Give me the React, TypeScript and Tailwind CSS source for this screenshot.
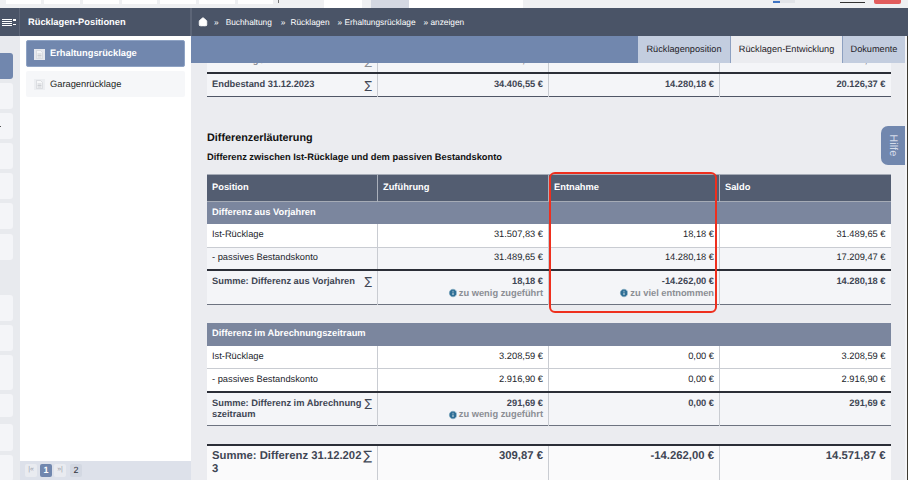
import { Home, Info } from 'lucide-react'

const th = 'border-l border-[#aab0bb] first:border-l-0 px-[5px] text-left align-middle text-[9.3px] font-bold text-white'
const cell = 'border-l border-[#c9ccd2] first:border-l-0 px-[5px] text-[9.3px]'

type Row = { label: string; values: string[] }
type SumRow = { label: string; values: string[]; notes?: (string | null)[] }

function Sigma({ className = '' }: { className?: string }) {
  return <span className={`absolute right-[5px] font-['DejaVu_Sans'] font-normal ${className}`}>∑</span>
}

function Note({ text }: { text: string }) {
  return (
    <div className="flex items-center justify-end gap-[1px] text-[9.3px] font-bold text-[#8b8e94]">
      <Info size={10} className="fill-[#2f6f96] text-white" />
      {text}
    </div>
  )
}

function Columns() {
  return (
    <colgroup>
      <col className="w-[170.5px]" />
      <col className="w-[171px]" />
      <col className="w-[171px]" />
      <col className="w-[171px]" />
    </colgroup>
  )
}

function RowLine({ row, alt }: { row: Row; alt?: boolean }) {
  return (
    <tr className={`h-[23px] border-b border-[#c9ccd2] ${alt ? 'bg-[#f4f5f8]' : 'bg-white'}`}>
      <td className={`${cell} text-[#22252b]`}>{row.label}</td>
      {row.values.map((v, i) => (
        <td key={i} className={`${cell} text-right text-[#22252b]`}>{v}</td>
      ))}
    </tr>
  )
}

function Summary({ row }: { row: SumRow }) {
  return (
    <tr className="h-[34px] border-t-2 border-b border-t-[#2b2e37] border-b-[#6d7380] bg-[#f4f5f8]">
      <td className={`${cell} relative pt-[5px] align-top font-bold leading-[11.5px] text-[#3f4654]`}>
        <div className="break-all pr-[9px]">{row.label}</div>
        <Sigma className="top-[5px] text-[11px]" />
      </td>
      {row.values.map((v, i) => (
        <td key={i} className={`${cell} pt-[5px] align-top text-right font-bold leading-[11.5px] text-[#3f4654]`}>
          {v}
          {row.notes?.[i] && <Note text={row.notes[i] as string} />}
        </td>
      ))}
    </tr>
  )
}

function GroupHead({ title }: { title: string }) {
  return (
    <tr className="h-[23px] bg-[#7b869e]">
      <td colSpan={4} className="px-[5px] text-[9.3px] font-bold text-white">{title}</td>
    </tr>
  )
}

const cardClass = 'rounded-r-[3px] bg-[#f4f5f8]'
const upperRows = ['mt-[4px]', 'mt-[4px]', 'mt-[4px]', 'mt-[4px]', 'mt-[5px]']
const lowerRows = ['mt-[31px] h-[26px]', 'mt-[4px] h-[26px]', 'mt-[4px] h-[35px]', 'mt-[4px] h-[23px]', 'mt-[7px] h-[27px]', 'mt-[4px] h-[26px]', 'mt-[4px] h-[26px]']

export default function App() {
  return (
    <div className="flex h-[480px] w-[908px] flex-col overflow-hidden bg-white font-['Liberation_Sans',Arial,sans-serif] [text-rendering:geometricPrecision]">
      {/* browser strip */}
      <div className="flex h-[8px] shrink-0 items-start bg-[#eff0f2]">
        <div className="ml-[6px] h-[4px] w-[35px] bg-white" />
        <div className="ml-[3px] h-[4px] w-[36px] bg-white" />
        <div className="ml-[3px] h-[4px] w-[36px] bg-white" />
        <div className="ml-[3px] h-[4px] w-[35px] bg-white" />
        <div className="ml-[3px] h-[4px] w-[36px] bg-white" />
        <div className="ml-[3px] h-[4px] w-[36px] bg-white" />
        <div className="ml-[3px] h-[4px] w-[35px] bg-white" />
        <div className="ml-[5px] h-[3px] w-[1px] bg-[#777]" />
        <div className="ml-[45px] h-[8px] w-[38px] bg-white" />
        <div className="ml-[9px] h-[8px] w-[38px] bg-[#d4d8e2]" />
        <div className="h-[8px] w-[114px] bg-white" />
        <div className="ml-[250px] flex h-[3px] w-[22px] items-end bg-[#e2e4e8]">
          <div className="h-[2px] w-[7px] bg-[#3f74c4]" />
        </div>
        <div className="ml-[45px] flex h-[3px] w-[25px] items-end overflow-hidden border-b border-[#333] text-[9px] leading-[9px] text-[#333]">
          admin
        </div>
        <div className="ml-[9px] h-[4px] w-[27px] rounded-b-[2px] bg-[#e25c5c]" />
      </div>

      <div className="flex min-h-0 flex-1">
        {/* narrow menu column */}
        <div className="flex w-[20px] shrink-0 flex-col bg-[#e8eaee]">
          <div className="flex h-[28px] shrink-0 items-center justify-end gap-[1px] border-r border-[#5c6577] bg-[#4a5467] pr-[3px]">
            <div className="flex w-[10px] flex-col gap-[1px]">
              <div className="h-[1px] bg-white" />
              <div className="h-[1px] bg-white" />
              <div className="h-[1px] bg-white" />
              <div className="h-[1px] bg-white" />
            </div>
            <div className="flex flex-col gap-[3px]">
              <div className="h-[1.5px] w-[3px] bg-white" />
              <div className="h-[1.5px] w-[3px] bg-white" />
            </div>
          </div>
          <div className="w-[13px]">
            <div className="mt-[17px] h-[26px] rounded-r-[3px] bg-[#7187ae]" />
            <div className={`mt-[4px] h-[26px] ${cardClass}`} />
            {upperRows.map((c, i) => (
              <div key={i} className={`${c} flex h-[26px] items-center ${cardClass}`}>
                {i === 0 && <div className="h-[1px] w-[1px] bg-[#555]" />}
              </div>
            ))}
          </div>
          <div className="mt-[4px] h-[2px] bg-[#666e80]" />
          <div className="w-[13px]">
            {lowerRows.map((c, i) => (
              <div key={i} className={`${c} ${cardClass}`} />
            ))}
          </div>
        </div>

        {/* positions sidebar */}
        <div className="flex w-[171px] shrink-0 flex-col bg-white">
          <div className="flex h-[28px] shrink-0 items-center border-r border-[#5c6577] bg-[#4a5467] pl-[8px] pt-[1px] text-[9.3px] font-bold text-white">
            Rücklagen-Positionen
          </div>
          <div className="flex flex-1 flex-col gap-[4px] px-[6px] pt-[4px]">
            <div className="flex h-[27px] items-center gap-[5px] rounded-[2px] border border-[#8fa3c4] bg-[#7187ae] pl-[7px] pt-[1px] text-[9.3px] font-bold text-white">
              <FileIcon active />
              Erhaltungsrücklage
            </div>
            <div className="flex h-[26px] items-center gap-[5px] rounded-[2px] bg-[#f6f7f9] pl-[8px] pt-[1px] text-[9.3px] text-[#1c1e22]">
              <FileIcon />
              Garagenrücklage
            </div>
          </div>
          <div className="flex h-[19px] shrink-0 items-center gap-[2px] bg-[#dde1ea] pl-[5px] text-[9px] font-bold">
            <span className="flex h-[13px] w-[12px] items-center justify-center rounded-[2px] bg-[#e9ebf0] text-[7px] font-normal text-[#9aa0ab]">|«</span>
            <span className="ml-[1px] flex h-[13px] w-[12px] items-center justify-center rounded-[2px] bg-[#7187ae] text-white">1</span>
            <span className="flex h-[13px] w-[12px] items-center justify-center rounded-[2px] bg-[#e9ebf0] text-[7px] font-normal text-[#9aa0ab]">»|</span>
            <span className="ml-[2px] flex h-[13px] w-[12px] items-center justify-center rounded-[2px] bg-[#d3d8e2] font-normal text-[#30343c]">2</span>
          </div>
        </div>

        {/* main */}
        <div className="relative flex min-w-0 flex-1 flex-col bg-[#ebecf0]">
          <div className="flex h-[28px] shrink-0 items-center border-l border-[#5c6577] bg-[#4a5467] pl-[6px] text-[8.3px] text-white">
            <Home size={10} className="fill-white" />
            <span className="ml-[6px]">»</span>
            <span className="ml-[7px]">Buchhaltung</span>
            <span className="ml-[9px]">»</span>
            <span className="ml-[5px]">Rücklagen</span>
            <span className="ml-[8px]">» Erhaltungsrücklage</span>
            <span className="ml-[8px]">» anzeigen</span>
          </div>
          <div className="z-10 flex h-[27px] shrink-0 justify-end bg-[#7187ae] pr-[3px] text-[9.2px] text-[#1f2228]">
            <div className="flex w-[92px] items-center justify-center bg-[#c3cddf]">Rücklagenposition</div>
            <div className="flex w-[113px] items-center justify-center border-x border-[#8da0c0] bg-[#ebecf0]">Rücklagen-Entwicklung</div>
            <div className="flex w-[62px] items-center justify-center bg-[#c3cddf]">Dokumente</div>
          </div>

          <div className="min-h-0 flex-1 overflow-hidden pl-[16px] pr-[15px]">
            <table className="mt-[-13px] w-[683.5px] table-fixed border-collapse">
              <Columns />
              <tbody>
                <tr className="h-[23px] bg-[#f4f5f8]">
                  <td className={`${cell} relative font-bold text-[#8b8e94]`}>
                    Zuführung / Entnahme
                    <Sigma className="top-[4px] text-[11px]" />
                  </td>
                  <td className={`${cell} text-right font-bold text-[#8b8e94]`}>3.208,59 €</td>
                  <td className={cell} />
                  <td className={`${cell} text-right font-bold text-[#8b8e94]`}>3.208,59 €</td>
                </tr>
                <tr className="h-[23px] border-t-2 border-b border-t-[#2b2e37] border-b-[#4f5666] bg-[#f4f5f8]">
                  <td className={`${cell} relative font-bold text-[#3f4654]`}>
                    Endbestand 31.12.2023
                    <Sigma className="top-[4px] text-[11px]" />
                  </td>
                  {['34.406,55 €', '14.280,18 €', '20.126,37 €'].map(v => (
                    <td key={v} className={`${cell} text-right font-bold text-[#3f4654]`}>{v}</td>
                  ))}
                </tr>
              </tbody>
            </table>

            <h2 className="mt-[35px] text-[10.8px] font-bold leading-[13px] text-[#111]">Differenzerläuterung</h2>
            <h3 className="mt-[7px] text-[9.3px] font-bold leading-[11px] text-[#111]">
              Differenz zwischen Ist-Rücklage und dem passiven Bestandskonto
            </h3>

            <table className="mt-[11px] w-[683.5px] table-fixed border-collapse">
              <Columns />
              <thead>
                <tr className="h-[27px] border-y border-[#a5abb6] bg-[#535d71]">
                  <th className={th}>Position</th>
                  <th className={th}>Zuführung</th>
                  <th className={th}>Entnahme</th>
                  <th className={th}>Saldo</th>
                </tr>
              </thead>
              <tbody>
                <GroupHead title="Differenz aus Vorjahren" />
                <RowLine row={{ label: 'Ist-Rücklage', values: ['31.507,83 €', '18,18 €', '31.489,65 €'] }} />
                <RowLine alt row={{ label: '- passives Bestandskonto', values: ['31.489,65 €', '14.280,18 €', '17.209,47 €'] }} />
                <Summary
                  row={{
                    label: 'Summe: Differenz aus Vorjahren',
                    values: ['18,18 €', '-14.262,00 €', '14.280,18 €'],
                    notes: ['zu wenig zugeführt', 'zu viel entnommen', null]
                  }}
                />
              </tbody>
            </table>

            <table className="mt-[18px] w-[683.5px] table-fixed border-collapse">
              <Columns />
              <tbody>
                <GroupHead title="Differenz im Abrechnungszeitraum" />
                <RowLine row={{ label: 'Ist-Rücklage', values: ['3.208,59 €', '0,00 €', '3.208,59 €'] }} />
                <RowLine row={{ label: '- passives Bestandskonto', values: ['2.916,90 €', '0,00 €', '2.916,90 €'] }} />
                <Summary
                  row={{
                    label: 'Summe: Differenz im Abrechnungszeitraum',
                    values: ['291,69 €', '0,00 €', '291,69 €'],
                    notes: ['zu wenig zugeführt', null, null]
                  }}
                />
              </tbody>
            </table>

            <table className="mt-[18px] w-[683.5px] table-fixed border-collapse">
              <Columns />
              <tbody>
                <tr className="h-[36px] border-t-2 border-t-[#2b2e37] bg-[#fafafb]">
                  <td className={`${cell} relative pt-[4px] align-top text-[11.3px] font-bold leading-[13px] text-[#3f4654]`}>
                    <div className="break-all pr-[9px]">Summe: Differenz 31.12.2023</div>
                    <Sigma className="top-[4px] text-[13px]" />
                  </td>
                  {['309,87 €', '-14.262,00 €', '14.571,87 €'].map(v => (
                    <td key={v} className={`${cell} pt-[4px] align-top text-right text-[11.3px] font-bold leading-[13px] text-[#3f4654]`}>
                      {v}
                    </td>
                  ))}
                </tr>
              </tbody>
            </table>
          </div>

          {/* help tab */}
          <div className="absolute right-[3px] top-[118px] z-20 flex h-[39px] w-[24px] items-center justify-center rounded-l-[7px] bg-[#7187ae]">
            <span className="rotate-90 text-[11px] text-[#d5dcea]">Hilfe</span>
          </div>

          {/* annotation */}
          <div className="pointer-events-none absolute left-[358px] top-[164px] z-20 h-[141px] w-[168px] rounded-[6px] border-2 border-[#ee2f1e]" />

          <div className="absolute right-0 top-[28px] bottom-0 z-30 w-[3px] border-r border-[#3d3a32] bg-[#f4f4f6]" />
        </div>
      </div>
    </div>
  )
}

function FileIcon({ active }: { active?: boolean }) {
  return (
    <svg width="11" height="11" viewBox="0 0 11 11" className="shrink-0">
      <rect width="11" height="11" fill={active ? '#e6e8ee' : '#eceef1'} />
      <path d="M2.5 1.5h4l2 2v6h-6z" fill={active ? '#f4f5f7' : '#f7f8f9'} stroke="#c6c9cf" strokeWidth="0.5" />
      <path d="M3.5 5h4M3.5 6.5h4M3.5 8h4" stroke="#b0b4bb" strokeWidth="0.6" />
    </svg>
  )
}
